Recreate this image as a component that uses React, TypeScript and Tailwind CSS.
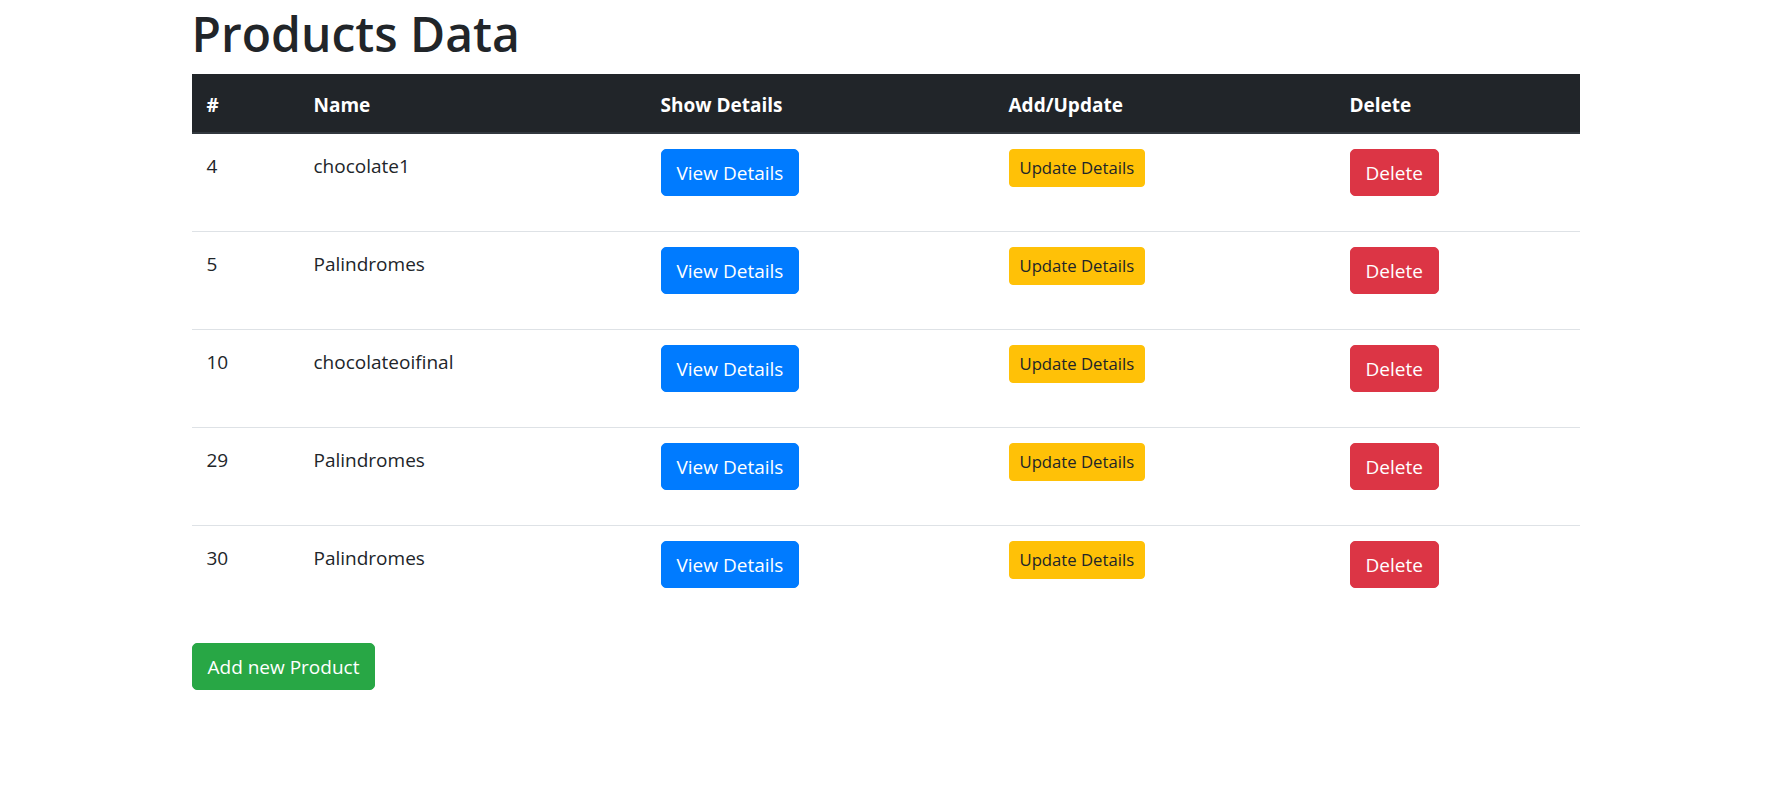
const products = [
  { id: 4, name: "chocolate1" },
  { id: 5, name: "Palindromes" },
  { id: 10, name: "chocolateoifinal" },
  { id: 29, name: "Palindromes" },
  { id: 30, name: "Palindromes" },
];

export default function App() {
  return (
    <div className="min-h-screen bg-white font-['Open_Sans',sans-serif] text-[#212529]">
      <div className="mx-auto w-[1388px]">
        <h1 className="pt-[4px] mb-[10px] text-[48px] font-semibold leading-[60px]">Products Data</h1>

        <table className="mb-5 w-full table-fixed border-collapse text-left text-[19px] leading-[30px]">
          <colgroup>
            <col className="w-[107px]" />
            <col className="w-[347px]" />
            <col className="w-[348px]" />
            <col className="w-[341px]" />
            <col />
          </colgroup>
          <thead>
            <tr className="bg-[#212529] text-white">
              <th className="border-b-2 border-[#32383e] px-[15px] pt-[16px] pb-[12px] font-bold">#</th>
              <th className="border-b-2 border-[#32383e] px-[15px] pt-[16px] pb-[12px] font-bold">Name</th>
              <th className="border-b-2 border-[#32383e] px-[15px] pt-[16px] pb-[12px] font-bold">Show Details</th>
              <th className="border-b-2 border-[#32383e] px-[15px] pt-[16px] pb-[12px] font-bold">Add/Update</th>
              <th className="border-b-2 border-[#32383e] px-[15px] pt-[16px] pb-[12px] font-bold">Delete</th>
            </tr>
          </thead>
          <tbody>
            {products.map((p) => (
              <tr key={p.id} className="border-t border-[#dee2e6]">
                <td className="px-[15px] pt-[17px] align-top">{p.id}</td>
                <td className="px-[15px] pt-[17px] align-top">{p.name}</td>
                <td className="p-[15px] align-top">
                  <button className="mb-5 block rounded-[5px] border border-[#007bff] bg-[#007bff] px-[15px] py-[7.5px] text-white">
                    View Details
                  </button>
                </td>
                <td className="p-[15px] align-top">
                  <button className="block rounded-[4px] border border-[#ffc107] bg-[#ffc107] px-[10px] py-[5px] text-[16.7px] leading-[26px] text-[#212529]">
                    Update Details
                  </button>
                </td>
                <td className="p-[15px] align-top">
                  <button className="mb-5 block rounded-[5px] border border-[#dc3545] bg-[#dc3545] px-[15px] py-[7.5px] text-white">
                    Delete
                  </button>
                </td>
              </tr>
            ))}
          </tbody>
        </table>

        <button className="rounded-[5px] border border-[#28a745] bg-[#28a745] px-[15px] py-[7.5px] text-[19px] leading-[30px] text-white">
          Add new Product
        </button>
      </div>
    </div>
  );
}
